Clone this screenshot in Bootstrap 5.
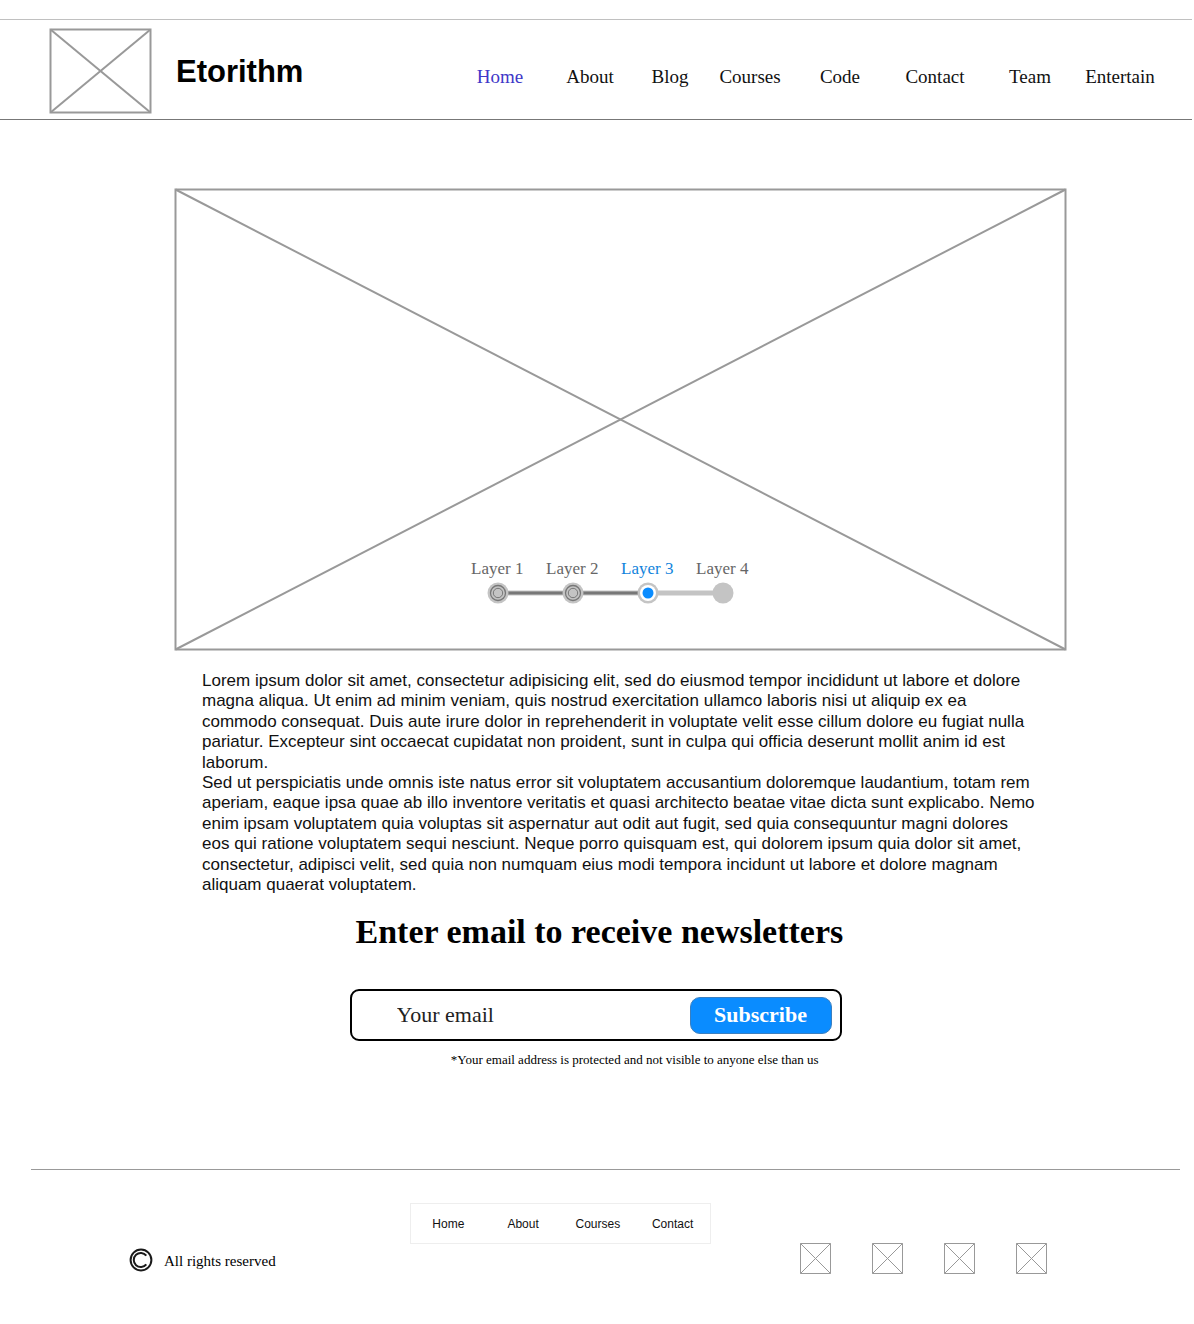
<!DOCTYPE html>
<html lang="en">
<head>
<meta charset="utf-8">
<meta name="viewport" content="width=device-width, initial-scale=1">
<title>Etorithm</title>
<link href="https://cdn.jsdelivr.net/npm/bootstrap@5.3.0/dist/css/bootstrap.min.css" rel="stylesheet">
<style>
  :root {
    --serif: "Liberation Serif", "Times New Roman", serif;
    --sans: "Liberation Sans", Arial, sans-serif;
    --frame: #999;
    --accent: #0a8cff;
  }
  body { font-family: var(--serif); color: #000; background: #fff; }
  a { text-decoration: none; }
  .frame { display: block; stroke: var(--frame); fill: none; }
  .frame line, .frame rect { vector-effect: non-scaling-stroke; }

  .site-header {
    margin: 19px 2px 0 0;
    padding: 2px 27px 0 49px;
    min-height: 101px;
    border-top: 1px solid #c0c0c0;
    border-bottom: 1px solid #777;
  }
  .brand-name { padding-top: 2px; font: bold 31px/36px var(--sans); color: #000; }
  .main-nav .nav-link {
    width: 90px;
    padding: 12px 0 0;
    font-size: 19px;
    line-height: 24px;
    text-align: center;
    color: #111;
  }
  .main-nav .nav-short { width: 70px; }
  .main-nav .nav-wide { width: 100px; }
  .main-nav .nav-link.active { color: #4038c8; }

  .hero { margin: 68px 127px 0 174px; }
  .hero-frame { width: 100%; aspect-ratio: 893 / 463; }
  .steps { left: 32%; bottom: 45px; width: 300px; }
  .steps li { width: 75px; }
  .steps a { display: block; padding-top: 1px; font-size: 17px; line-height: 23px; text-align: center; color: #666; }
  .steps a.current { color: #1184dc; }
  .steps-track { display: block; width: 300px; height: 26px; }

  .story { margin: 20px 157px 0 202px; font: 17px/1.2 var(--sans); color: #111; }

  .newsletter { width: 492px; max-width: 100%; margin: 17px auto 0; }
  .newsletter-wrap { padding-right: 3px; }
  .newsletter h1 { margin: 0 0 37px 6px; font-size: 34px; line-height: 40px; font-weight: 700; white-space: nowrap; }
  .email-box { height: 52px; padding: 0 8px 0 45px; border: 2px solid #000; border-radius: 9px; }
  .email-box input { height: 40px; border: 0; padding: 0; font-size: 22px; line-height: 36px; color: #222; outline: 0; background: transparent; min-width: 0; }
  .email-box input::placeholder { color: #222; opacity: 1; }
  .email-box button {
    width: 142px;
    height: 37px;
    border: 1px solid #3a7fc0;
    border-radius: 10px;
    background: var(--accent);
    color: #fff;
    font-size: 22px;
    line-height: 28px;
    font-weight: 700;
  }
  .note { margin: 10px 23px 0 0; font-size: 13px; line-height: 18px; text-align: right; }

  .site-footer { margin: 100px 14px 0 31px; padding: 33px 133px 50px 98px; border-top: 1px solid #999; }
  .rights { width: 281px; margin-top: 44px; gap: 11px; font-size: 15px; line-height: 24px; }
  .rights span { padding-top: 2px; }
  .foot-nav { border: 1px solid #eee; width: 301px; height: 41px; font: 12px/16px var(--sans); }
  .foot-nav a { color: #111; }
  .social { width: 247px; margin-top: 40px; }
</style>
</head>
<body>
<header class="site-header d-flex align-items-center justify-content-between">
  <a class="d-flex align-items-center gap-4" href="#">
    <svg class="frame" width="103" height="86" viewBox="0 0 103 86" stroke-width="2" aria-hidden="true"><rect x="1.500" y="1.500" width="100" height="83"/><line x1="1.500" y1="1.500" x2="101.500" y2="84.500"/><line x1="101.500" y1="1.500" x2="1.500" y2="84.500"/></svg>
    <span class="brand-name">Etorithm</span>
  </a>
  <nav class="main-nav nav flex-nowrap" aria-label="Main">
    <a class="nav-link active" href="#">Home</a>
    <a class="nav-link" href="#">About</a>
    <a class="nav-link nav-short" href="#">Blog</a>
    <a class="nav-link" href="#">Courses</a>
    <a class="nav-link" href="#">Code</a>
    <a class="nav-link nav-wide" href="#">Contact</a>
    <a class="nav-link" href="#">Team</a>
    <a class="nav-link" href="#">Entertain</a>
  </nav>
</header>

<main>
  <section class="hero position-relative">
    <svg class="frame hero-frame" viewBox="0 0 893 463" preserveAspectRatio="none" stroke-width="2" aria-hidden="true"><rect x="1.500" y="1.500" width="890" height="460"/><line x1="1.500" y1="1.500" x2="891.500" y2="461.500"/><line x1="891.500" y1="1.500" x2="1.500" y2="461.500"/></svg>
    <div class="steps position-absolute">
      <ul class="list-unstyled d-flex m-0">
        <li><a href="#">Layer 1</a></li>
        <li><a href="#">Layer 2</a></li>
        <li><a class="current" href="#" aria-current="step">Layer 3</a></li>
        <li><a href="#">Layer 4</a></li>
      </ul>
      <svg class="steps-track" viewBox="0 0 300 26" fill="none" aria-hidden="true">
        <path d="M38 13H263" stroke="#c4c4c4" stroke-width="5"/>
        <path d="M38 13H188" stroke="#777" stroke-width="3"/>
        <g fill="#c4c4c4"><circle cx="38" cy="13" r="10.500"/><circle cx="113" cy="13" r="10.500"/><circle cx="188" cy="13" r="10.500"/><circle cx="263" cy="13" r="10.500"/></g>
        <g stroke="#777"><circle cx="38" cy="13" r="7.500" stroke-width="1.300"/><circle cx="38" cy="13" r="4.700"/><circle cx="113" cy="13" r="7.500" stroke-width="1.300"/><circle cx="113" cy="13" r="4.700"/></g>
        <circle cx="188" cy="13" r="8" fill="#fff"/><circle cx="188" cy="13" r="5.500" fill="#0a8cff"/>
      </svg>
    </div>
  </section>

  <section class="story">
    <p class="m-0">Lorem ipsum dolor sit amet, consectetur adipisicing elit, sed do eiusmod tempor incididunt ut labore et dolore magna aliqua. Ut enim ad minim veniam, quis nostrud exercitation ullamco laboris nisi ut aliquip ex ea commodo consequat. Duis aute irure dolor in reprehenderit in voluptate velit esse cillum dolore eu fugiat nulla pariatur. Excepteur sint occaecat cupidatat non proident, sunt in culpa qui officia deserunt mollit anim id est laborum.</p>
    <p class="m-0">Sed ut perspiciatis unde omnis iste natus error sit voluptatem accusantium doloremque laudantium, totam rem aperiam, eaque ipsa quae ab illo inventore veritatis et quasi architecto beatae vitae dicta sunt explicabo. Nemo enim ipsam voluptatem quia voluptas sit aspernatur aut odit aut fugit, sed quia consequuntur magni dolores eos qui ratione voluptatem sequi nesciunt. Neque porro quisquam est, qui dolorem ipsum quia dolor sit amet, consectetur, adipisci velit, sed quia non numquam eius modi tempora incidunt ut labore et dolore magnam aliquam quaerat voluptatem.</p>
  </section>

  <div class="newsletter-wrap">
    <section class="newsletter">
      <h1>Enter email to receive newsletters</h1>
      <form class="email-box d-flex align-items-center">
        <label class="visually-hidden" for="email">Your email</label>
        <input class="flex-grow-1" type="email" id="email" placeholder="Your email">
        <button class="flex-shrink-0 p-0" type="submit">Subscribe</button>
      </form>
      <p class="note">*Your email address is protected and not visible to anyone else than us</p>
    </section>
  </div>
</main>

<footer class="site-footer d-flex align-items-start">
  <div class="rights d-flex align-items-center flex-shrink-0">
    <svg width="24" height="24" viewBox="0 0 24 24" fill="none" stroke="#1a1a1a" stroke-width="2" aria-hidden="true"><circle cx="12" cy="12" r="10.400"/><path d="M17.300 7.700A7 7 0 1 0 17.300 16.300"/></svg>
    <span>All rights reserved</span>
  </div>
  <nav class="foot-nav d-flex align-items-center text-center" aria-label="Footer">
    <a class="col-3" href="#">Home</a>
    <a class="col-3" href="#">About</a>
    <a class="col-3" href="#">Courses</a>
    <a class="col-3" href="#">Contact</a>
  </nav>
  <div class="social d-flex justify-content-between ms-auto">
    <a href="#" aria-label="Social link 1"><svg class="frame" width="31" height="31" viewBox="0 0 31 31"><rect x=".5" y=".5" width="30" height="30"/><line x1=".5" y1=".5" x2="30.500" y2="30.500"/><line x1="30.500" y1=".5" x2=".5" y2="30.500"/></svg></a>
    <a href="#" aria-label="Social link 2"><svg class="frame" width="31" height="31" viewBox="0 0 31 31"><rect x=".5" y=".5" width="30" height="30"/><line x1=".5" y1=".5" x2="30.500" y2="30.500"/><line x1="30.500" y1=".5" x2=".5" y2="30.500"/></svg></a>
    <a href="#" aria-label="Social link 3"><svg class="frame" width="31" height="31" viewBox="0 0 31 31"><rect x=".5" y=".5" width="30" height="30"/><line x1=".5" y1=".5" x2="30.500" y2="30.500"/><line x1="30.500" y1=".5" x2=".5" y2="30.500"/></svg></a>
    <a href="#" aria-label="Social link 4"><svg class="frame" width="31" height="31" viewBox="0 0 31 31"><rect x=".5" y=".5" width="30" height="30"/><line x1=".5" y1=".5" x2="30.500" y2="30.500"/><line x1="30.500" y1=".5" x2=".5" y2="30.500"/></svg></a>
  </div>
</footer>
<script src="https://cdn.jsdelivr.net/npm/bootstrap@5.3.0/dist/js/bootstrap.bundle.min.js"></script>
</body>
</html>
